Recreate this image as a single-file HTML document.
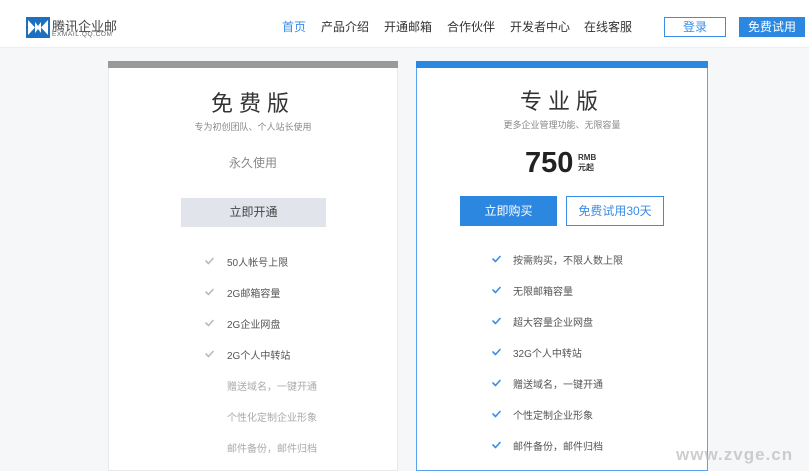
<!DOCTYPE html>
<html><head><meta charset="utf-8"><style>
*{margin:0;padding:0;box-sizing:border-box}
body{width:809px;height:466px;overflow:hidden;background:#f6f7f9;font-family:"Liberation Sans","Noto Sans CJK SC",sans-serif;position:relative}
.a{position:absolute;white-space:nowrap}
.hdr{position:absolute;left:0;top:0;width:809px;height:48px;background:#fff;border-bottom:1px solid #eceef1}
.nav{font-size:12px;color:#333;top:18px}
.card{position:absolute;background:#fff}
.c{text-align:center}
.li{font-size:10px;color:#555}
</style></head><body>
<div class="hdr"></div>
<svg class="a" style="left:26px;top:17px" width="24" height="21" viewBox="0 0 24 21"><rect width="24" height="21" fill="#1d6fc0"/><path d="M2 3 L9 10.5 L2 18 Z M22 3 L15 10.5 L22 18 Z" fill="#fff"/><path d="M9 5 L12 9 L15 5 L15 16 L12 12 L9 16Z" fill="#fff"/></svg>
<div class="a" style="left:52px;top:16px;font-size:13px;color:#444">腾讯企业邮</div>
<div class="a" style="left:52px;top:31px;font-size:6.5px;color:#666;letter-spacing:0.6px">EXMAIL.QQ.COM</div>
<div class="a nav" style="left:282px;color:#3a8ee6">首页</div>
<div class="a nav" style="left:321px">产品介绍</div>
<div class="a nav" style="left:384px">开通邮箱</div>
<div class="a nav" style="left:447px">合作伙伴</div>
<div class="a nav" style="left:510px">开发者中心</div>
<div class="a nav" style="left:584px">在线客服</div>
<div class="a c" style="left:664px;top:17px;width:62px;height:20px;border:1px solid #3a8ee6;color:#3a8ee6;font-size:12px;line-height:18px">登录</div>
<div class="a c" style="left:739px;top:17px;width:66px;height:20px;background:#2b87e0;color:#fff;font-size:12px;line-height:20px">免费试用</div>

<div class="card" style="left:108px;top:61px;width:290px;height:410px;border:1px solid #e8e9ec;border-top:none">
<div style="height:7px;background:#999;margin:0 -1px"></div></div>
<div class="a c" style="left:108px;top:86px;width:290px;font-size:22px;color:#333;letter-spacing:6px">免费版</div>
<div class="a c" style="left:108px;top:120px;width:290px;font-size:9px;color:#888">专为初创团队、个人站长使用</div>
<div class="a c" style="left:108px;top:154px;width:290px;font-size:12px;color:#888">永久使用</div>
<div class="a c" style="left:181px;top:198px;width:145px;height:29px;background:#e1e5eb;font-size:12px;color:#444;line-height:29px">立即开通</div>

<div class="card" style="left:416px;top:61px;width:292px;height:410px;border:1px solid #5aa3ee;border-top:none">
<div style="height:7px;background:#2b87e0;margin:0 -1px"></div></div>
<div class="a c" style="left:416px;top:84px;width:292px;font-size:22px;color:#333;letter-spacing:6px">专业版</div>
<div class="a c" style="left:416px;top:118px;width:292px;font-size:9px;color:#888">更多企业管理功能、无限容量</div>
<div class="a" style="left:525px;top:147px;font-size:29px;font-weight:bold;color:#222">750</div>
<div class="a" style="left:578px;top:153px;font-size:8px;font-weight:bold;color:#333;line-height:10px">RMB<br>元起</div>
<div class="a c" style="left:460px;top:196px;width:97px;height:30px;background:#2b87e0;color:#fff;font-size:12px;line-height:30px">立即购买</div>
<div class="a c" style="left:566px;top:196px;width:98px;height:30px;border:1px solid #3a8ee6;color:#3a8ee6;font-size:12px;line-height:28px">免费试用30天</div>

<svg width="0" height="0" style="position:absolute"><defs><path id="ck" d="M1 4 L3.5 6.5 L8 1.5" fill="none" stroke-width="1.6" stroke-linecap="round" stroke-linejoin="round"/></defs></svg>
<svg class="a" style="left:205px;top:257px" width="9" height="8" stroke="#b5bac4"><use href="#ck"/></svg><div class="a li" style="left:227px;top:254px">50人帐号上限</div>
<svg class="a" style="left:205px;top:288px" width="9" height="8" stroke="#b5bac4"><use href="#ck"/></svg><div class="a li" style="left:227px;top:285px">2G邮箱容量</div>
<svg class="a" style="left:205px;top:319px" width="9" height="8" stroke="#b5bac4"><use href="#ck"/></svg><div class="a li" style="left:227px;top:316px">2G企业网盘</div>
<svg class="a" style="left:205px;top:350px" width="9" height="8" stroke="#b5bac4"><use href="#ck"/></svg><div class="a li" style="left:227px;top:347px">2G个人中转站</div>
<div class="a li" style="left:227px;top:378px;color:#aaa">赠送域名，一键开通</div>
<div class="a li" style="left:227px;top:409px;color:#aaa">个性化定制企业形象</div>
<div class="a li" style="left:227px;top:440px;color:#aaa">邮件备份，邮件归档</div>

<svg class="a" style="left:492px;top:255px" width="9" height="8" stroke="#3a8ee6"><use href="#ck"/></svg><div class="a li" style="left:513px;top:252px">按需购买，不限人数上限</div>
<svg class="a" style="left:492px;top:286px" width="9" height="8" stroke="#3a8ee6"><use href="#ck"/></svg><div class="a li" style="left:513px;top:283px">无限邮箱容量</div>
<svg class="a" style="left:492px;top:317px" width="9" height="8" stroke="#3a8ee6"><use href="#ck"/></svg><div class="a li" style="left:513px;top:314px">超大容量企业网盘</div>
<svg class="a" style="left:492px;top:348px" width="9" height="8" stroke="#3a8ee6"><use href="#ck"/></svg><div class="a li" style="left:513px;top:345px">32G个人中转站</div>
<svg class="a" style="left:492px;top:379px" width="9" height="8" stroke="#3a8ee6"><use href="#ck"/></svg><div class="a li" style="left:513px;top:376px">赠送域名，一键开通</div>
<svg class="a" style="left:492px;top:410px" width="9" height="8" stroke="#3a8ee6"><use href="#ck"/></svg><div class="a li" style="left:513px;top:407px">个性定制企业形象</div>
<svg class="a" style="left:492px;top:441px" width="9" height="8" stroke="#3a8ee6"><use href="#ck"/></svg><div class="a li" style="left:513px;top:438px">邮件备份，邮件归档</div>

<div class="a" style="left:676px;top:445px;font-size:17px;font-weight:bold;color:rgba(190,190,190,0.75);letter-spacing:1px">www.zvge.cn</div>
</body></html>
